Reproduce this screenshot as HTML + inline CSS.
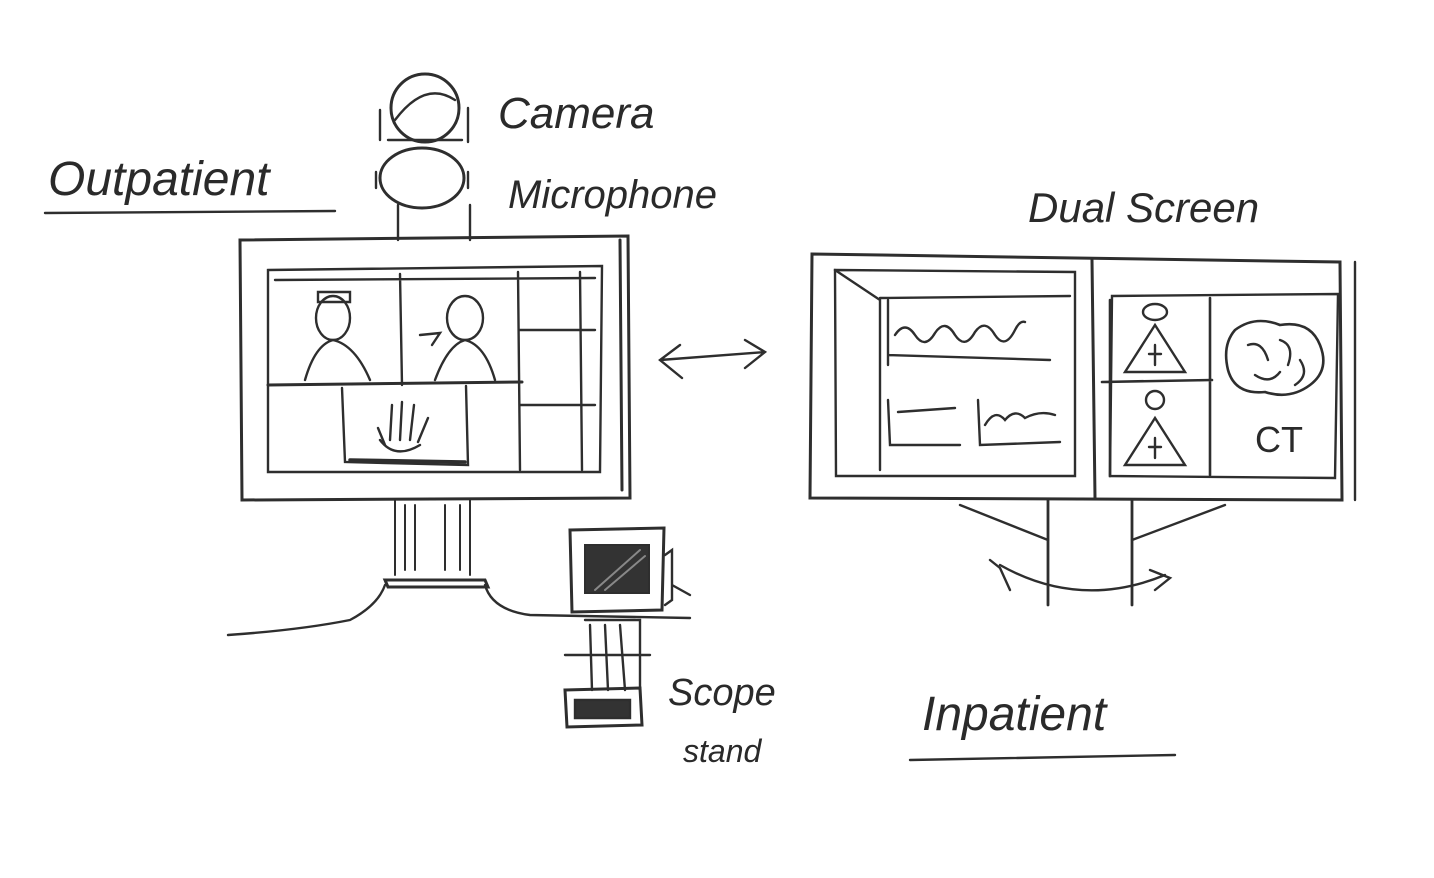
<!DOCTYPE html>
<html><head><meta charset="utf-8"><style>
html,body{margin:0;padding:0;background:#fff;width:1434px;height:878px;overflow:hidden}
svg{display:block}
text{font-family:"Liberation Sans",sans-serif;fill:#2a2a2a;font-style:italic}
</style></head><body>
<svg width="1434" height="878" viewBox="0 0 1434 878" fill="none" stroke="#2e2e2e" stroke-width="2.4" stroke-linecap="round">
<!-- labels -->
<text x="48" y="195" font-size="48" stroke="none">Outpatient</text>
<path d="M45 213 L335 211"/>
<text x="498" y="128" font-size="44" stroke="none">Camera</text>
<text x="508" y="208" font-size="40" stroke="none">Microphone</text>
<text x="1028" y="222" font-size="42" stroke="none">Dual Screen</text>
<text x="668" y="705" font-size="38" stroke="none">Scope</text>
<text x="683" y="762" font-size="32" stroke="none">stand</text>
<text x="922" y="730" font-size="48" stroke="none">Inpatient</text>
<path d="M910 760 L1175 755"/>
<text x="1255" y="452" font-size="36" stroke="none" style="font-style:normal">CT</text>
<!-- camera -->
<circle cx="425" cy="108" r="34" stroke-width="3"/>
<path d="M395 120 Q425 80 455 100" />
<path d="M380 110 L380 140 M468 108 L468 142 M388 140 L462 140"/>
<ellipse cx="422" cy="178" rx="42" ry="30" stroke-width="3"/>
<path d="M376 172 L376 188 M468 172 L468 188"/>
<path d="M398 205 L398 240 M470 205 L470 240"/>
<!-- left monitor -->
<path d="M240 240 L628 236 L630 498 L242 500 Z" stroke-width="3"/>
<path d="M268 270 L602 266 L600 472 L268 472 Z"/>
<path d="M275 280 L595 278 M400 274 L402 385 M518 272 L520 470 M580 272 L582 470 M520 330 L595 330 M520 405 L595 405"/>
<path d="M268 385 L522 382" stroke-width="3"/>
<path d="M620 240 L622 490" stroke-width="3"/>
<!-- people -->
<ellipse cx="333" cy="318" rx="17" ry="22"/>
<path d="M318 292 L350 292 L350 302 L318 302 Z"/>
<path d="M305 380 Q315 345 333 340 Q355 345 370 380"/>
<ellipse cx="465" cy="318" rx="18" ry="22"/>
<path d="M435 380 Q448 345 465 340 Q485 345 495 380"/>
<path d="M420 335 L440 333 L432 345"/>
<!-- hand box -->
<path d="M342 388 L345 462 L468 465 L466 386"/>
<path d="M350 460 L465 462" stroke-width="3.5"/>
<path d="M385 445 L378 428 M390 440 L392 405 M400 440 L402 402 M410 440 L414 405 M418 442 L428 418 M380 440 Q395 460 420 445"/>
<!-- pole -->
<path d="M395 500 L395 575 M470 500 L470 575 M405 505 L405 570 M415 505 L415 570 M445 505 L445 570 M460 505 L460 570" stroke-width="2"/>
<path d="M385 580 L485 580 L488 587 L388 587 Z" stroke-width="3"/>
<path d="M385 585 Q378 605 350 620 Q300 630 228 635"/>
<path d="M485 585 Q492 610 530 615 L690 618"/>
<!-- scope stand -->
<path d="M570 530 L664 528 L662 610 L572 612 Z" stroke-width="3"/>
<rect x="585" y="545" width="64" height="48" fill="#333" stroke-width="2"/>
<path d="M595 590 L640 550 M605 590 L645 556" stroke="#888" stroke-width="2"/>
<path d="M665 555 L672 550 L672 600 L665 605 M672 585 L690 595"/>
<path d="M585 620 L640 620 L640 690 M590 625 L592 690 M605 625 L608 690 M620 625 L625 690"/>
<path d="M565 655 L650 655"/>
<path d="M565 690 L640 688 L642 725 L567 727 Z" stroke-width="3"/>
<path d="M575 700 L630 700 L630 718 L575 718 Z" fill="#333"/>
<!-- arrow -->
<path d="M660 360 L765 352 M680 345 L660 360 L682 378 M745 340 L765 352 L745 368"/>
<!-- right monitor -->
<path d="M812 254 L1340 262 L1342 500 L810 498 Z" stroke-width="3"/>
<path d="M835 270 L1075 272 L1075 476 L836 476 Z"/>
<path d="M835 270 L880 300 L880 470 M880 298 L1070 296"/>
<path d="M1092 260 L1095 498" stroke-width="3"/>
<path d="M1112 296 L1338 294 L1335 478 L1110 476 Z"/>
<path d="M1110 300 L1110 476 M1210 298 L1210 475 M1102 382 L1212 380" stroke-width="2.6"/>
<path d="M1355 262 L1355 500"/>
<!-- charts -->
<path d="M895 335 Q905 320 915 335 Q925 350 935 333 Q945 318 955 335 Q965 350 975 332 Q985 318 995 335 Q1005 350 1015 330 Q1020 320 1025 322"/>
<path d="M888 355 L1050 360 M888 300 L888 365"/>
<path d="M888 400 L890 445 L960 445 M898 412 L955 408 M978 400 L980 445 L1060 442 M985 425 Q995 408 1005 420 Q1015 408 1025 418 Q1040 410 1055 415"/>
<!-- small figures -->
<ellipse cx="1155" cy="312" rx="12" ry="8"/>
<path d="M1125 372 L1155 325 L1185 372 Z M1155 345 L1155 365 M1149 354 L1161 354"/>
<circle cx="1155" cy="400" r="9"/>
<path d="M1125 465 L1155 418 L1185 465 Z M1155 438 L1155 458 M1149 447 L1161 447"/>
<!-- brain -->
<path d="M1235 330 Q1255 315 1280 325 Q1310 320 1320 345 Q1330 370 1310 385 Q1290 400 1265 392 Q1235 395 1228 370 Q1222 345 1235 330 Z" stroke-width="2.6"/>
<path d="M1248 345 Q1262 340 1268 360 M1280 340 Q1295 345 1288 365 M1300 360 Q1310 375 1295 385 M1255 375 Q1270 385 1280 372"/>
<!-- stand -->
<path d="M1048 500 L1048 605 M1132 500 L1132 605" stroke-width="2.8"/>
<path d="M960 505 L1048 540 M1225 505 L1132 540"/>
<path d="M1000 565 Q1080 610 1165 575 M990 560 L1000 568 L1010 590 M1150 570 L1170 578 L1155 590"/>
</svg>
</body></html>
